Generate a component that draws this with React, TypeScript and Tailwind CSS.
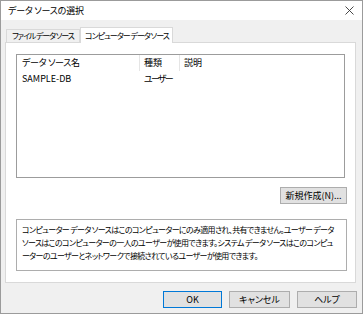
import React from "react";

const font = "[font-family:'Noto_Sans_CJK_JP','Noto_Sans',sans-serif] [font-feature-settings:'palt']";

function Btn({ label, w, primary }: { label: string; w: string; primary?: boolean }) {
  return (
    <div
      className={`${w} h-[17px] flex items-center justify-center bg-[#e1e1e1] text-[9px] text-black border ${
        primary ? "border-[#0078d7]" : "border-[#adadad]"
      }`}
    >
      {label}
    </div>
  );
}

export default function App() {
  return (
    <div className={`w-[363px] h-[314px] border border-[#9b9b9b] bg-[#f0f0f0] flex flex-col text-black ${font}`}>
      {/* title bar */}
      <div className="h-[19px] bg-white flex items-center justify-between pl-[7px] pr-[8px]">
        <span className="text-[9px] leading-none tracking-[-0.2px]">データ ソースの選択</span>
        <svg width="9" height="9" viewBox="0 0 9 9" className="text-[#333]">
          <path d="M0.5 0.5 L8.5 8.5 M8.5 0.5 L0.5 8.5" stroke="currentColor" strokeWidth="0.9" fill="none" />
        </svg>
      </div>

      {/* tabs */}
      <div className="flex items-end pl-[5px] pt-[7px]">
        <div className="h-[13px] w-[74px] pl-[5px] flex items-center border border-b-0 border-[#d9d9d9] bg-[#f0f0f0] text-[8px] tracking-[-1.1px] leading-none whitespace-nowrap">
          ファイル データ ソース
        </div>
        <div className="relative z-10 -mb-px h-[16px] w-[93px] pl-[4px] flex items-center border border-b-0 border-[#d9d9d9] bg-white text-[8px] tracking-[-1px] leading-none whitespace-nowrap">
          コンピューター データ ソース
        </div>
      </div>

      {/* panel */}
      <div className="ml-[4px] w-[351px] h-[241px] border border-[#d9d9d9] bg-white flex flex-col">
        <div className="ml-[10px] mt-[11px] w-[329px] h-[124px] border border-[#9c9c9c] text-[9px]">
          <div className="flex h-[16px] items-center">
            <div className="w-[123px] pl-[5px] border-r border-[#e5e5e5] h-full flex items-center tracking-[-0.3px]">データ ソース名</div>
            <div className="w-[40px] pl-[4px] border-r border-[#e5e5e5] h-full flex items-center">種類</div>
            <div className="pl-[4px]">説明</div>
          </div>
          <div className="flex h-[16px] items-center">
            <div className="w-[123px] pl-[5px]">SAMPLE-DB</div>
            <div className="pl-[4px] tracking-[-1.8px]">ユーザー</div>
          </div>
        </div>

        <div className="flex justify-end mt-[9px] pr-[8px]">
          <Btn label="新規作成(N)..." w="w-[67px]" />
        </div>

        <div className="ml-[10px] mt-[15px] w-[331px] h-[52px] border border-[#adadad] px-[5px] pt-[3px] text-[8px] tracking-[-0.65px] leading-[13px] whitespace-nowrap overflow-hidden">
          <div>コンピューター データ ソースはこのコンピューターにのみ適用され、共有できません。ユーザー データ</div>
          <div>ソースはこのコンピューターの一人のユーザーが使用できます。システム データ ソースはこのコンピュ</div>
          <div>ーターのユーザーとネットワークで接続されているユーザーが使用できます。</div>
        </div>
      </div>

      {/* bottom buttons */}
      <div className="flex justify-end gap-[7px] mt-[8px] pr-[5px]">
        <Btn label="OK" w="w-[59px]" primary />
        <Btn label="キャンセル" w="w-[61px]" />
        <Btn label="ヘルプ" w="w-[60px]" />
      </div>
    </div>
  );
}
